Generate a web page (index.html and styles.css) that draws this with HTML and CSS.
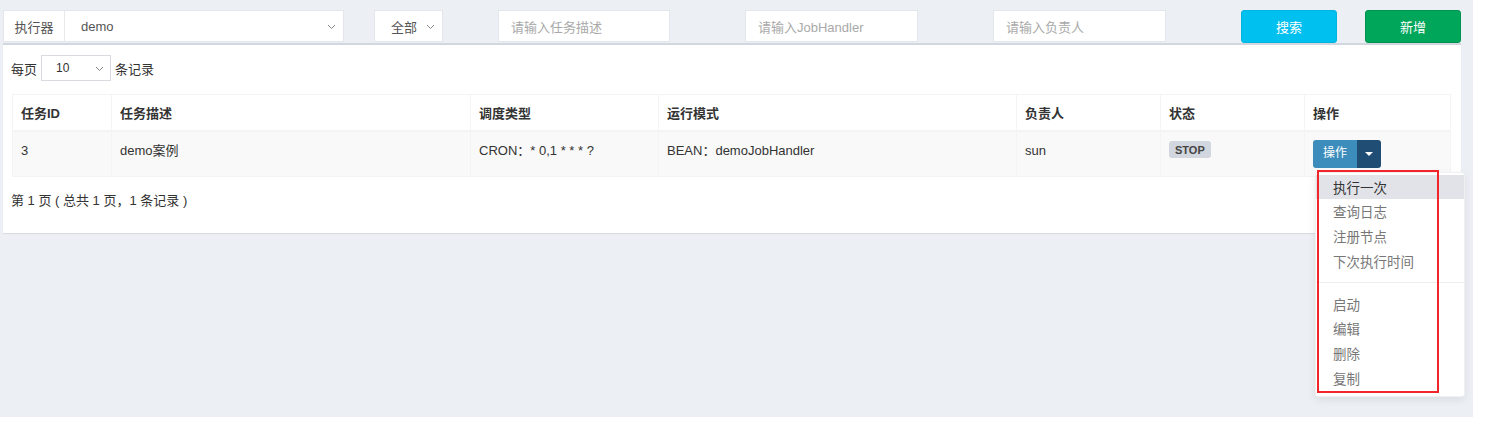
FILE: index.html
```html
<!DOCTYPE html>
<html lang="zh">
<head>
<meta charset="utf-8">
<title>任务管理</title>
<link rel="stylesheet" href="styles.css">
</head>
<body>
<div class="content">
  <div class="filters">
    <div class="group">
      <span class="addon">执行器</span>
      <div class="select wide"><span>demo</span><svg class="chev" width="9" height="6" viewBox="0 0 9 6"><polyline points="1,1 4.5,4.5 8,1" fill="none" stroke="#888" stroke-width="1"/></svg></div>
    </div>
    <div class="select small"><span>全部</span><svg class="chev" width="9" height="6" viewBox="0 0 9 6"><polyline points="1,1 4.5,4.5 8,1" fill="none" stroke="#888" stroke-width="1"/></svg></div>
    <div class="input">请输入任务描述</div>
    <div class="input">请输入JobHandler</div>
    <div class="input">请输入负责人</div>
    <div class="btn btn-search">搜索</div>
    <div class="btn btn-add">新增</div>
  </div>

  <div class="panel">
    <div class="length">
      <span>每页</span>
      <div class="len-select"><span>10</span><svg class="chev" width="9" height="6" viewBox="0 0 9 6"><polyline points="1,1 4.5,4.5 8,1" fill="none" stroke="#888" stroke-width="1"/></svg></div>
      <span>条记录</span>
    </div>

    <div class="table-wrap">
      <table class="grid">
        <colgroup>
          <col class="c1"><col class="c2"><col class="c3"><col class="c4"><col class="c5"><col class="c6"><col class="c7">
        </colgroup>
        <thead>
          <tr><th>任务ID</th><th>任务描述</th><th>调度类型</th><th>运行模式</th><th>负责人</th><th>状态</th><th>操作</th></tr>
        </thead>
        <tbody>
          <tr>
            <td>3</td>
            <td>demo案例</td>
            <td>CRON：* 0,1 * * * ?</td>
            <td>BEAN：demoJobHandler</td>
            <td>sun</td>
            <td><span class="label">STOP</span></td>
            <td>
              <div class="btn-group">
                <span class="op">操作</span><span class="caret-btn"><span class="caret"></span></span>
                <ul class="menu">
                  <li class="active">执行一次</li>
                  <li>查询日志</li>
                  <li>注册节点</li>
                  <li>下次执行时间</li>
                  <li class="divider"></li>
                  <li>启动</li>
                  <li>编辑</li>
                  <li>删除</li>
                  <li>复制</li>
                  <div class="annot"></div>
                </ul>
              </div>
            </td>
          </tr>
        </tbody>
      </table>
    </div>

    <div class="info">第 1 页 ( 总共 1 页，1 条记录 )</div>
  </div>
</div>
</body>
</html>
```

FILE: styles.css
```css
* { box-sizing: border-box; }
html, body { margin: 0; padding: 0; background: #fff; }
body {
  font-family: "Liberation Sans", "Noto Sans CJK SC", sans-serif;
  font-size: 13px;
  color: #333;
}
.content {
  width: 1473px;
  height: 417px;
  background: #ecf0f5;
  padding: 10px 0 0 3px;
}
.filters {
  display: grid;
  grid-template-columns: 371px 124px 247px 248px 248px 124px 96px;
  height: 33px;
}
.group { display: flex; width: 341px; height: 32px; }
.addon {
  width: 62px;
  background: #fff;
  border: 1px solid #e3e6eb;
  border-right: 1px solid #e6e8ec;
  color: #555;
  display: flex; align-items: center; justify-content: center;
  font-size: 13px;
}
.select {
  position: relative;
  background: #fff;
  border: 1px solid #e3e6eb;
  height: 32px;
  display: flex; align-items: center;
  color: #555;
}
.select.wide { width: 279px; border-left: none; padding-left: 16px; }
.select.small { width: 69px; padding-left: 16px; }
.chev { position: absolute; right: 7px; top: 13px; }
.input {
  width: 173px; height: 32px;
  background: #fff;
  border: 1px solid #e3e6eb;
  color: #a9a9a9;
  padding-left: 12px;
  display: flex; align-items: center;
}
.filters .input:nth-child(3) { width: 172px; }
.btn {
  width: 96px; height: 33px;
  border-radius: 3px;
  color: #fff;
  display: flex; align-items: center; justify-content: center;
  font-size: 13px;
}
.btn-search { background: #00c0ef; border: 1px solid #00b3e0; }
.btn-add { background: #00a65a; border: 1px solid #009150; }

.panel {
  width: 1458px;
  height: 190px;
  background: #fff;
  border-top: 2px solid #d2d6de;
  box-shadow: 0 1px 1px rgba(0,0,0,0.08);
  padding-top: 10px;
}
.length {
  display: flex; align-items: center; gap: 4px;
  padding-left: 8px;
  height: 26px;
  color: #333;
}
.len-select {
  position: relative;
  width: 70px; height: 26px;
  border: 1px solid #d7dadf;
  display: flex; align-items: center;
  padding-left: 14px;
  font-size: 12px;
  color: #333;
}
.len-select .chev { top: 10px; right: 6px; }
.table-wrap { padding: 13px 11px 0 9px; }
.grid {
  width: 1438px;
  border-collapse: collapse;
  table-layout: fixed;
}
.c1 { width: 99px; } .c2 { width: 359px; } .c3 { width: 188px; } .c4 { width: 358px; }
.c5 { width: 144px; } .c6 { width: 144px; } .c7 { width: 146px; }
.grid th, .grid td {
  border: 1px solid #f4f4f4;
  text-align: left;
  padding: 0 8px;
  vertical-align: top;
}
.grid th { height: 36px; font-weight: bold; vertical-align: middle; border-bottom: 2px solid #f4f4f4; }
.grid tbody tr { background: #f9f9f9; }
.grid td { height: 46px; padding-top: 10px; line-height: 17px; }
.grid td:nth-child(6) { padding-top: 9px; }
.grid td:nth-child(7) { padding-top: 8px; }
.label {
  display: inline-block;
  background: #d2d6de;
  color: #444;
  font-weight: bold;
  font-size: 11px;
  padding: 1px 6px 0;
  height: 17px; line-height: 16px;
  border-radius: 3px;
}
.btn-group { position: relative; display: inline-flex; height: 28px; }
.op {
  width: 44px; background: #3c8dbc; color: #fff;
  font-size: 12px;
  display: flex; align-items: center; justify-content: center;
  border-radius: 3px 0 0 3px;
}
.caret-btn {
  width: 24px; background: #204d74;
  border-radius: 0 3px 3px 0;
  display: flex; align-items: center; justify-content: center;
}
.caret {
  width: 0; height: 0;
  border-left: 4px solid transparent; border-right: 4px solid transparent;
  border-top: 4px solid #fff;
}
.menu {
  position: absolute;
  top: 32px; left: 2px;
  width: 150px;
  margin: 0; padding: 2px 0 5px;
  list-style: none;
  background: #fff;
  border: 1px solid #f0f0f0;
  border-radius: 3px;
  box-shadow: 0 3px 8px rgba(0,0,0,0.08);
  z-index: 10;
}
.menu li {
  height: 24.8px; line-height: 24.8px;
  padding-left: 17px;
  font-size: 13.5px;
  color: #777;
  font-family: "Noto Sans CJK SC", sans-serif;
}
.menu li.active { background: #e1e3e9; color: #333; }
.menu li.divider { height: 1px; margin: 8px 0 9px; background: #eeeeee; }
.annot {
  position: absolute;
  left: 1px; top: -3px;
  width: 122px; height: 223px;
  border: 2px solid #f2262a;
  pointer-events: none;
}
.info { padding: 15px 0 0 8px; line-height: 18px; }
```
